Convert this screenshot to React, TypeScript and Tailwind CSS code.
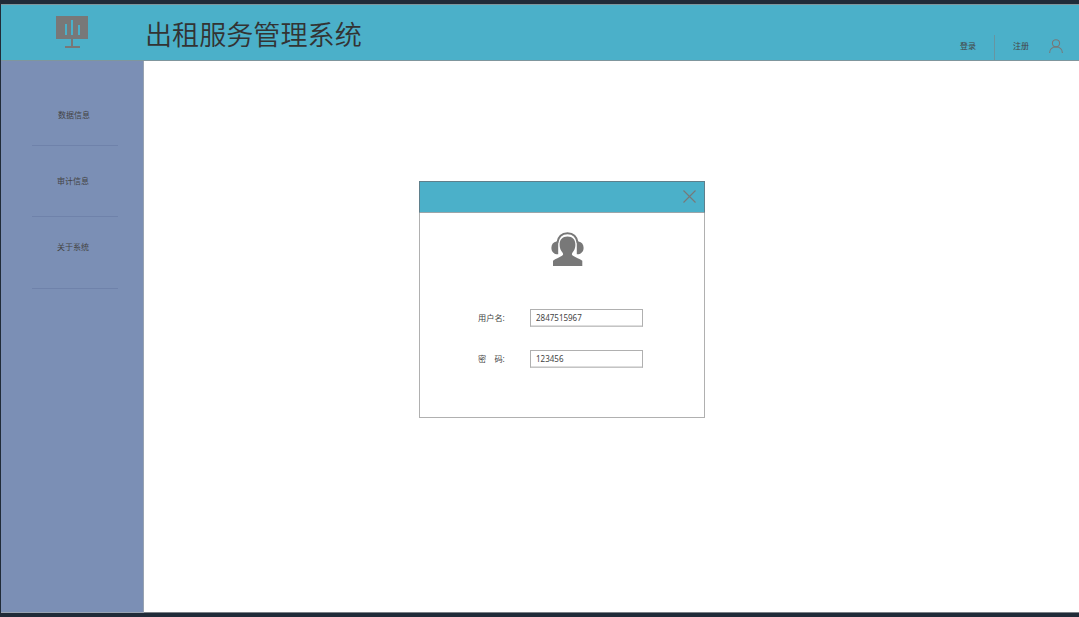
import { useState } from 'react';

const MENU = [
  { label: '数据信息', className: 'h-[85px] pt-[48px] pl-[26px]' },
  { label: '审计信息', className: 'h-[71px] pt-[29px] pl-[25px]' },
  { label: '关于系统', className: 'h-[72px] pt-[24px] pl-[25px]' },
];

function BoardIcon() {
  return (
    <svg width="32" height="33" viewBox="0 0 32 33" fill="#787878">
      <path d="M0 0h32v23H17v7h7v2H9v-2h6v-7H0z" />
      <path d="M9 8h2v11H9zM15 4h2v15h-2zM22 9h2v10h-2z" fill="#4bb0c9" />
    </svg>
  );
}

function UserIcon() {
  return (
    <svg width="14" height="15" viewBox="0 0 14 15" fill="none" stroke="#787878" strokeWidth="1.1">
      <circle cx="7" cy="4.3" r="3.6" />
      <path d="M.6 14c0-3.500 2.600-6.100 6.400-6.100s6.400 2.600 6.400 6.100" />
    </svg>
  );
}

function HeadsetIcon() {
  return (
    <svg width="33" height="34" viewBox="0 0 33 34" fill="#787878">
      <path d="M2 34v-5.200c2.700-2 6-3.300 9-5 1.400-.8 1.300-1.800.6-3-1.800-2.200-3-5-3-8.100C8.600 7.500 11.500 4.500 16.500 4.500s7.900 3 7.900 8.200c0 3.100-1.200 5.900-3 8.100-.7 1.200-.8 2.200.6 3 3 1.700 6.300 3 9.300 5V34z" />
      <path d="M6.300 11C7.200 5 11 1.300 16.500 1.300S25.800 5 26.700 11" fill="none" stroke="#787878" strokeWidth="2" />
      <path d="M7.200 9.500v12.700H5.500C2.300 21.800.4 19.300.4 15.800S2.300 10 5.500 9.500zM25.800 9.500v12.700h1.700c3.200-.4 5.100-2.900 5.100-6.400S30.700 10 27.500 9.500z" />
    </svg>
  );
}

function Field({
  label,
  value,
  onChange,
}: {
  label: string;
  value: string;
  onChange: (value: string) => void;
}) {
  return (
    <label className="flex h-[18px] items-center pl-[58px]">
      <span className="w-[52px] whitespace-pre text-[8.2px] leading-3">{label}</span>
      <input
        type="text"
        value={value}
        onChange={(e) => onChange(e.target.value)}
        className="h-[18px] w-[113px] border border-[#b0b0b0] border-b-[#c4c4c4] bg-white pb-px pl-[5px] font-['Noto_Sans',sans-serif] text-[8px] leading-[14px] text-[#444] shadow-[inset_0_-1px_0_#dedede] outline-none"
      />
    </label>
  );
}

function LoginDialog() {
  const [username, setUsername] = useState('2847515967');
  const [password, setPassword] = useState('123456');

  return (
    <div className="mt-[120px] ml-[275px] h-[237px] w-[286px] border border-[#b0b0b0] bg-white">
      <div className="-mx-px -mt-px flex h-8 justify-end border border-[#5f7f8b] border-b-[#9ba5a9] bg-[#4bb0c9] pt-2 pr-[8px]">
        <button type="button" aria-label="关闭" className="h-[13px]">
          <svg width="13" height="13" viewBox="0 0 13 13" stroke="#787878" strokeWidth="1.1">
            <path d="M.5.5l12 12M12.500.5l-12 12" />
          </svg>
        </button>
      </div>
      <div className="flex h-[96px] justify-center pt-[19px] pl-[11px]">
        <HeadsetIcon />
      </div>
      <Field label="用户名:" value={username} onChange={setUsername} />
      <div className="h-[23px]" />
      <Field label={'密\u3000码:'} value={password} onChange={setPassword} />
    </div>
  );
}

export default function App() {
  return (
    <div className="flex h-screen flex-col overflow-hidden bg-[#202b38] pt-1 pb-1 pl-px font-['Noto_Sans','Noto_Sans_CJK_SC',sans-serif] text-[#444]">
      <header className="flex h-[57px] shrink-0 border-y border-[#7f969d] bg-[#4bb0c9]">
        <div className="w-[144px] pt-[11px] pl-[55px]">
          <BoardIcon />
        </div>
        <h1 className="pt-[9px] text-[27.1px] font-[350] leading-10 text-[#333] [font-family:'Noto_Sans_CJK_SC',sans-serif]">出租服务管理系统</h1>
        <nav className="ml-auto flex pr-4 text-[8px] leading-3">
          <button type="button" className="mt-[35px] h-3 w-[34px] text-left">登录</button>
          <div className="mt-[30px] w-px bg-[#6795a1]" />
          <button type="button" className="mt-[35px] ml-[18px] h-3 w-9 text-left">注册</button>
          <div className="pt-[34px]">
            <UserIcon />
          </div>
        </nav>
      </header>

      <div className="flex min-h-0 flex-1">
        <aside className="w-[143px] shrink-0 border-r border-b border-[#98a3b1] bg-[#7b8fb5]">
          <ul className="ml-[31px] w-[86px]">
            {MENU.map((item) => (
              <li key={item.label} className={`border-b border-[#6f82aa] text-[8px] leading-3 ${item.className}`}>
                {item.label}
              </li>
            ))}
          </ul>
        </aside>
        <main className="flex-1 border-b border-[#7c8187] bg-white">
          <LoginDialog />
        </main>
      </div>
    </div>
  );
}
